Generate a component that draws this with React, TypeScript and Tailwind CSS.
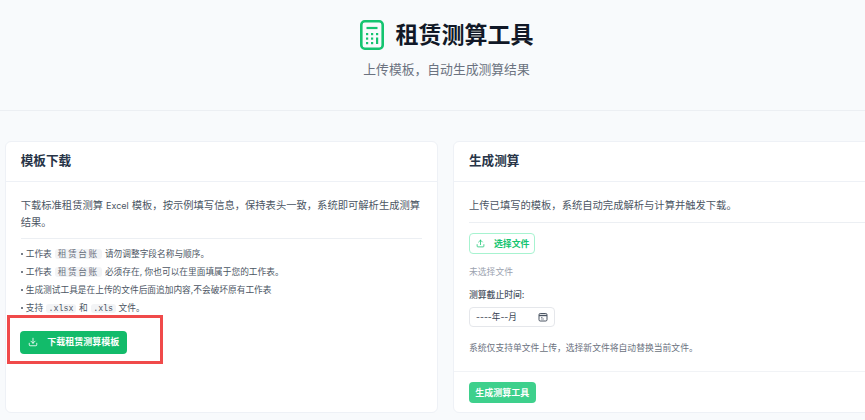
import { Download, Upload } from "lucide-react";

const font = { fontFamily: '"Inter", "Noto Sans CJK SC", sans-serif' };

function Tag({ children, mono }: { children: React.ReactNode; mono?: boolean }) {
  return (
    <span className={`mx-[3px] rounded-[3px] bg-[#f3f4f6] ${mono ? "px-[2.5px] font-['Liberation_Mono',monospace] text-[8.3px] text-[#4b5563]" : "px-[3px] tracking-[1.6px] text-[#6b7280]"}`}>
      {children}
    </span>
  );
}

function Dot() {
  return <span className="mr-[3px] inline-block h-[2px] w-[2px] translate-y-[-2px] rounded-full bg-[#4b5563]" />;
}

function Calc() {
  return (
    <svg width="24" height="30" viewBox="0 0 24 30" fill="none" className="shrink-0">
      <rect x="1.3" y="1.3" width="21.4" height="27.4" rx="3.5" stroke="#14c470" strokeWidth="2.6" />
      <path d="M6.5 8h11" stroke="#14c470" strokeWidth="2.2" />
      <g fill="#14c470">
        <rect x="6" y="13" width="2.2" height="2.2" />
        <rect x="11" y="13" width="2.2" height="2.2" />
        <rect x="16" y="13" width="2.2" height="2.2" />
        <rect x="6" y="17.5" width="2.2" height="2.2" />
        <rect x="11" y="17.5" width="2.2" height="2.2" />
        <rect x="16" y="17.5" width="2.2" height="6.5" />
        <rect x="6" y="22" width="2.2" height="2.2" />
        <rect x="11" y="22" width="2.2" height="2.2" />
      </g>
    </svg>
  );
}

export default function App() {
  return (
    <div style={font} className="h-[420px] w-[865px] overflow-hidden bg-[#f8fafc]">
      <div className="w-[893px]">
        <header className="flex h-[111px] flex-col items-center border-b border-[#eceff3] pt-[20px]">
          <div className="flex items-center gap-[12px]">
            <Calc />
            <h1 className="text-[23px] leading-[30px] font-bold text-[#111827]">租赁测算工具</h1>
          </div>
          <p className="mt-[8px] text-[12.8px] leading-[24px] text-[#6b7280]">上传模板，自动生成测算结果</p>
        </header>

        <main className="grid grid-cols-2 gap-[15px] pt-[30px] pr-[6.7px] pl-[4.7px]">
          <section className="relative h-[271.5px] rounded-[6px] border border-[#eef1f6] bg-white">
            <h2 className="h-[39px] border-b border-[#eef1f6] px-[15px] text-[12.6px] leading-[37px] font-bold text-[#273447] box-content">
              模板下载
            </h2>
            <div className="px-[15px] pt-[15px]">
              <p className="text-[10.3px] leading-[17px] text-[#4b5563]">
                下载标准租赁测算<span className="mx-[3px] text-[9px]">Excel</span>模板，按示例填写信息，保持表头一致，系统即可解析生成测算结果。
              </p>
              <ul className="mt-[7px] flex flex-col border-t border-[#eceff3] pt-[6px] text-[8.7px] leading-[18px] text-[#4b5563]">
                <li><Dot />工作表<Tag>租赁台账</Tag>请勿调整字段名称与顺序。</li>
                <li><Dot />工作表<Tag>租赁台账</Tag>必须存在, 你也可以在里面填属于您的工作表。</li>
                <li><Dot />生成测试工具是在上传的文件后面追加内容,不会破坏原有工作表</li>
                <li><Dot />支持<Tag mono>.xlsx</Tag>和<Tag mono>.xls</Tag>文件。</li>
              </ul>
              <button className="mt-[12.5px] -ml-[0.5px] flex h-[23px] w-[107px] items-center rounded-[4px] bg-[#12bb6a] pl-[8px] text-[9px] font-semibold text-white">
                <Download size={10} strokeWidth={2} />
                <span className="ml-[9px]">下载租赁测算模板</span>
              </button>
            </div>
            <div className="absolute top-[173px] left-[1.3px] h-[49px] w-[156px] border-[3px] border-[#f04a4a]" />
          </section>

          <section className="h-[271.5px] rounded-[6px] border border-[#eef1f6] bg-white">
            <h2 className="h-[39px] border-b border-[#eef1f6] px-[15px] text-[12.6px] leading-[37px] font-bold text-[#273447] box-content">
              生成测算
            </h2>
            <div className="border-b border-[#f1f3f6] px-[15px] pt-[15px]">
              <p className="text-[10.3px] leading-[17px] text-[#4b5563]">上传已填写的模板，系统自动完成解析与计算并触发下载。</p>
              <div className="mt-[8px] border-t border-[#eceff3] pt-[10px]">
                <button className="flex h-[20.5px] w-[66px] items-center rounded-[4px] border border-[#a7f3d0] pl-[6px] text-[8.9px] font-semibold text-[#14c470]">
                  <Upload size={9} strokeWidth={2} />
                  <span className="ml-[9px]">选择文件</span>
                </button>
                <p className="mt-[11px] text-[8.8px] leading-[14px] text-[#9ca3af]">未选择文件</p>
                <p className="mt-[9px] text-[8.8px] leading-[14px] font-medium text-[#4b5563]">测算截止时间:</p>
                <div className="mt-[5.7px] flex h-[20px] w-[86px] items-center justify-between rounded-[4px] border border-[#e5e7eb] px-[6px] text-[8.6px] text-[#374151]">
                  <span>----年--月</span>
                  <svg width="10" height="10" viewBox="0 0 10 10" fill="none">
                    <rect x="1" y="1.5" width="8" height="7.5" rx="1.2" stroke="#4b5563" strokeWidth="1" />
                    <path d="M1 3.5h8" stroke="#4b5563" strokeWidth="1.4" />
                    <path d="M3 5.5h1.5M3 7h3" stroke="#6b7280" strokeWidth=".8" />
                  </svg>
                </div>
                <p className="mt-[14px] pb-[15.5px] text-[8.8px] leading-[14px] text-[#6b7280]">系统仅支持单文件上传，选择新文件将自动替换当前文件。</p>
              </div>
            </div>
            <div className="px-[15px] pt-[10.5px]">
              <button className="block h-[20.5px] w-[66.5px] rounded-[4px] bg-[#3ed08c] text-[9px] font-semibold text-white">生成测算工具</button>
            </div>
          </section>
        </main>
      </div>
    </div>
  );
}
